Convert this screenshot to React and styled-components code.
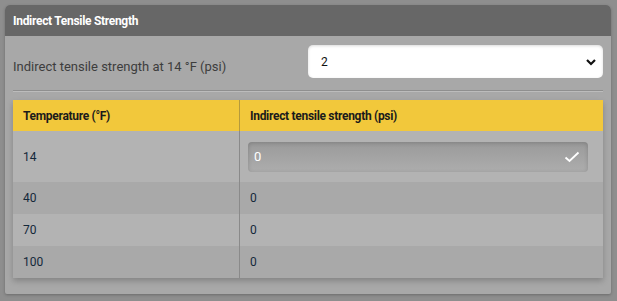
import styled, { createGlobalStyle } from "styled-components";

const GlobalStyle = createGlobalStyle`
  html, body {
    margin: 0;
    padding: 0;
    background: #8e8e8e;
    font-family: Roboto, "Liberation Sans", sans-serif;
  }
  * { box-sizing: border-box; }
`;

const Page = styled.div`
  padding: 5px 6px 7px 5px;
`;

const Card = styled.section`
  background: #a8a8a8;
  border-radius: 5px 5px 2px 2px;
  box-shadow: 0 1px 3px rgba(0, 0, 0, 0.25);
  padding-bottom: 16px;
`;

const CardHeader = styled.h2`
  margin: 0;
  height: 31px;
  padding: 0 8px;
  display: flex;
  align-items: center;
  background: #676767;
  border-radius: 5px 5px 0 0;
  color: #fff;
  font-size: 12px;
  font-weight: 700;
  letter-spacing: -0.3px;
`;

const Body = styled.div`
  padding: 9px 8px 0 8px;
`;

const FieldRow = styled.div`
  display: flex;
  align-items: center;
  justify-content: space-between;
  height: 33px;
  margin-bottom: 12px;
`;

const Label = styled.label`
  color: #3d3d3d;
  font-size: 13px;
  padding-top: 9px;
`;

const Select = styled.div`
  width: 295px;
  height: 33px;
  background: #fff;
  border-radius: 5px;
  display: flex;
  align-items: center;
  justify-content: space-between;
  padding: 0 6px 0 13px;
  font-size: 12px;
  color: #111;
  box-shadow: inset 0 1px 3px rgba(0, 0, 0, 0.15);
`;

const Divider = styled.hr`
  margin: 0 0 8px 0;
  border: 0;
  border-top: 1px solid #8f8f8f;
  border-bottom: 1px solid #bcbcbc;
`;

const Table = styled.div`
  display: grid;
  grid-template-columns: 227px 1fr;
  box-shadow: 0 3px 6px rgba(0, 0, 0, 0.22);
`;

const Cell = styled.div`
  display: flex;
  align-items: center;
  height: ${(p) => p.$h || 32}px;
  padding: 0 10px;
  font-size: 12px;
  color: #14283a;
  background: ${(p) => (p.$head ? "#f2c83b" : p.$odd ? "#b3b3b3" : "#a9a9a9")};
  font-weight: ${(p) => (p.$head ? 700 : 400)};
  letter-spacing: ${(p) => (p.$head ? "-0.3px" : "0")};
  border-right: ${(p) => (p.$first ? "1px solid #8a8a8a" : "0")};
  ${(p) => p.$head && "color: #1b1b1b;"}
  ${(p) => p.$head && p.$first && "border-right-color: #b59a3c;"}
`;

const Input = styled.div`
  flex: 1;
  height: 30px;
  margin-right: 5px;
  margin-left: -2px;
  border-radius: 4px;
  background: linear-gradient(to bottom, #9a9a9a, #adadad);
  box-shadow: inset 0 1px 4px rgba(0, 0, 0, 0.18);
  display: flex;
  align-items: center;
  justify-content: space-between;
  padding: 0 8px 0 6px;
  color: #fff;
  font-size: 13px;
`;

const rows = [
  { t: "14", v: "0", edit: true },
  { t: "40", v: "0" },
  { t: "70", v: "0" },
  { t: "100", v: "0" },
];

export default function App() {
  return (
    <>
      <GlobalStyle />
      <Page>
        <Card>
          <CardHeader>Indirect Tensile Strength</CardHeader>
          <Body>
            <FieldRow>
              <Label>Indirect tensile strength at 14 °F (psi)</Label>
              <Select>
                <span>2</span>
                <svg width="12" height="10" viewBox="0 0 12 10">
                  <path d="M2 3 L6 7 L10 3" fill="none" stroke="#111" strokeWidth="2.2" />
                </svg>
              </Select>
            </FieldRow>
            <Divider />
            <Table>
              <Cell $head $first $h={31}>Temperature (°F)</Cell>
              <Cell $head $h={31}>Indirect tensile strength (psi)</Cell>
              {rows.map((r, i) => [
                <Cell key={r.t + "a"} $first $odd={i % 2 === 0} $h={r.edit ? 51 : 32}>
                  {r.t}
                </Cell>,
                <Cell key={r.t + "b"} $odd={i % 2 === 0} $h={r.edit ? 51 : 32}>
                  {r.edit ? (
                    <Input>
                      <span>{r.v}</span>
                      <svg width="16" height="12" viewBox="0 0 16 12">
                        <path d="M1.5 6.5 L5.5 10 L14.5 1.5" fill="none" stroke="#fff" strokeWidth="1.8" />
                      </svg>
                    </Input>
                  ) : (
                    r.v
                  )}
                </Cell>,
              ])}
            </Table>
          </Body>
        </Card>
      </Page>
    </>
  );
}
